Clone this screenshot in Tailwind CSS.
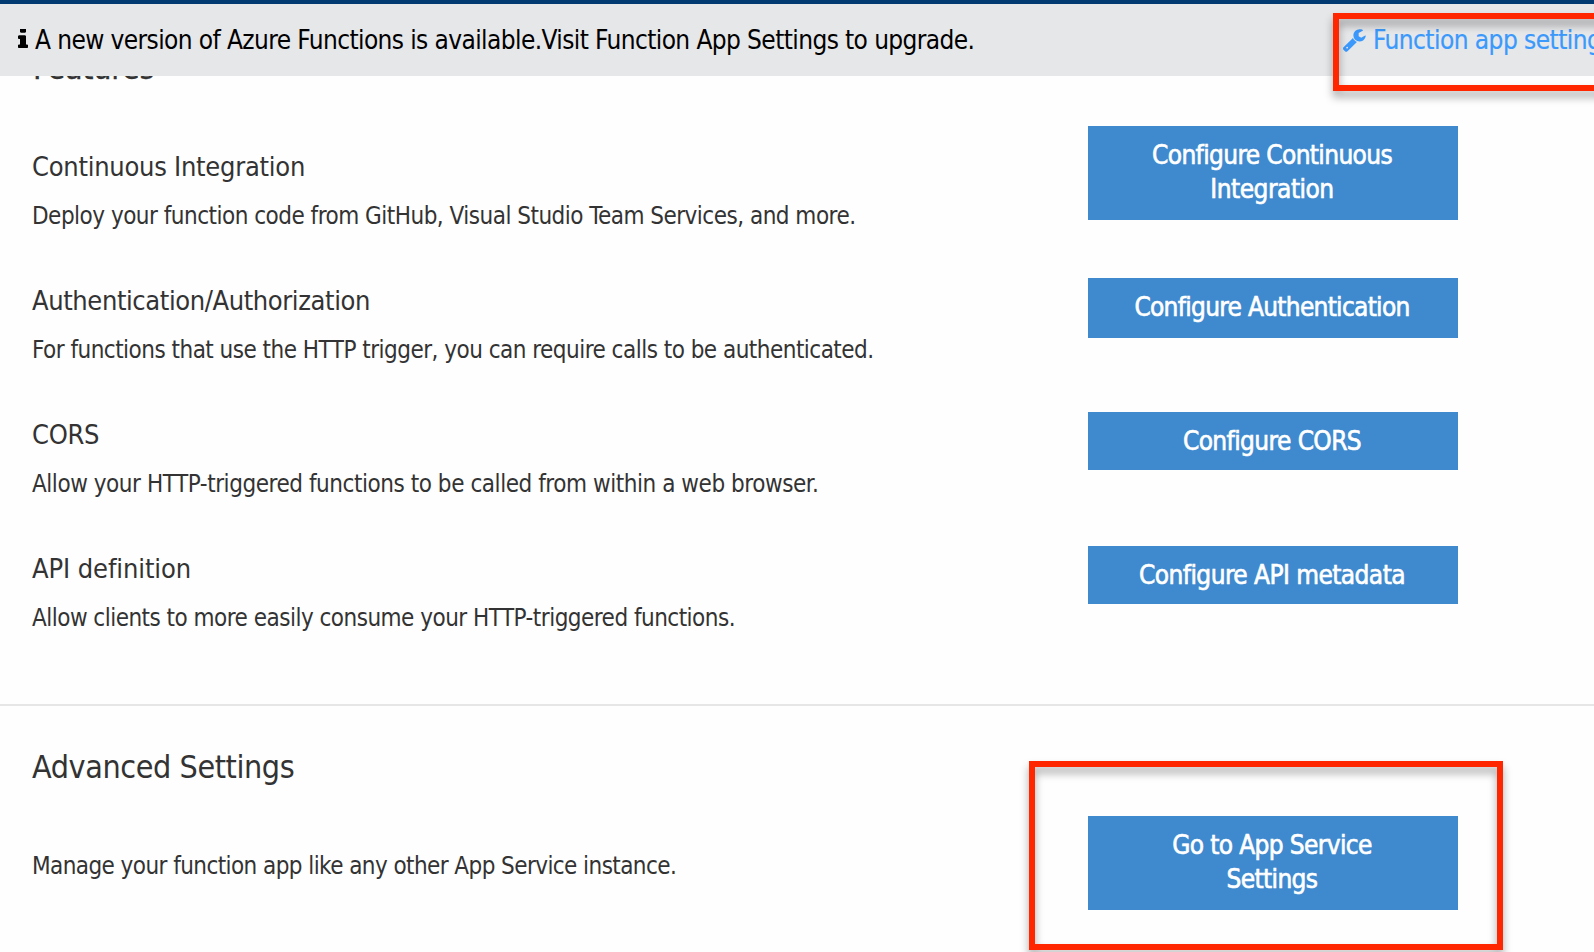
<!DOCTYPE html>
<html lang="en">
<head>
<meta charset="utf-8">
<title>Function app settings</title>
<script src="https://cdn.jsdelivr.net/npm/@tailwindcss/browser@4"></script>
</head>
<body class="relative h-[952px] w-[1594px] overflow-hidden bg-[#fefefe] font-['DejaVu_Sans_Condensed','Noto_Sans',sans-serif] text-[#333]">
  <!-- Notification banner -->
  <header class="relative z-10 flex h-[76px] items-start border-t-4 border-[#003a70] bg-[#e6e7e9] pt-[19px] text-[26px] leading-[34px] text-black">
    <svg class="ml-[18px] mt-[6px] h-[20px] w-[10px] shrink-0" viewBox="0 0 640 1408" preserveAspectRatio="none" fill="currentColor"><g transform="matrix(1 0 0 -1 0 1344)"><path d="M640 192v-128q0 -26 -19 -45t-45 -19h-512q-26 0 -45 19t-19 45v128q0 26 19 45t45 19h64v384h-64q-26 0 -45 19t-19 45v128q0 26 19 45t45 19h384q26 0 45 -19t19 -45v-576h64q26 0 45 -19t19 -45zM512 1344v-192q0 -26 -19 -45t-45 -19h-256q-26 0 -45 19t-19 45v192q0 26 19 45t45 19h256q26 0 45 -19t19 -45z"/></g></svg>
    <p class="ml-[7px] whitespace-nowrap tracking-[-0.605px]">A new version of Azure Functions is available.Visit Function App Settings to upgrade.</p>
    <a class="ml-auto flex w-[251px] shrink-0 whitespace-nowrap text-[#3b99fc]">
      <svg class="mt-[6px] h-[23px] w-[23px] shrink-0" viewBox="0 0 1662 1643" fill="currentColor"><g transform="matrix(1 0 0 -1 -21 1408)"><path d="M384 64q0 26 -19 45t-45 19t-45 -19t-19 -45t19 -45t45 -19t45 19t19 45zM1028 484l-682 -682q-37 -37 -90 -37q-52 0 -91 37l-106 108q-38 36 -38 90q0 53 38 91l681 681q39 -98 114.500 -173.500t173.500 -114.500zM1662 919q0 -39 -23 -106q-47 -134 -164.500 -217.500t-258.500 -83.500q-185 0 -316.500 131.500t-131.500 316.500t131.500 316.500t316.500 131.500q58 0 121.500 -16.500t107.500 -46.500q16 -11 16 -28t-16 -28l-293 -169v-224l193 -107q5 3 79 48.500t135.500 81t70.500 35.500q15 0 23.500 -10t8.500 -25z"/></g></svg>
      <span class="ml-[7px] tracking-[-0.55px] [-webkit-text-stroke:0.2px_currentColor]">Function app settings</span>
    </a>
  </header>

  <main>
    <section class="box-content h-[656px] border-b-2 border-[#e6e6e6]">
      <h2 class="-mt-[28px] ml-[33px] h-[78px] text-[32px] leading-[40px] tracking-[-0.3px] [-webkit-text-stroke:0.3px_currentColor]">Features</h2>

      <div class="flex h-[134px] items-start">
        <div class="w-[1088px] pt-6 pl-8 whitespace-nowrap">
          <h3 class="text-[27px] leading-[34px] tracking-[-0.26px]">Continuous Integration</h3>
          <p class="mt-[15px] text-[24px] leading-[34px] tracking-[-0.51px]">Deploy your function code from GitHub, Visual Studio Team Services, and more.</p>
        </div>
        <button class="flex h-[94px] w-[370px] flex-col items-center justify-center bg-[#3f8ace] pr-[2px] pb-[2px] text-[26px] leading-[34px] text-white [-webkit-text-stroke:0.6px_white]"><span class="tracking-[-0.65px]">Configure Continuous</span><span class="tracking-[-0.5px]">Integration</span></button>
      </div>

      <div class="flex h-[134px] items-start">
        <div class="w-[1088px] pt-6 pl-8 whitespace-nowrap">
          <h3 class="text-[27px] leading-[34px] tracking-[-0.4px]">Authentication/Authorization</h3>
          <p class="mt-[15px] text-[24px] leading-[34px] tracking-[-0.52px]">For functions that use the HTTP trigger, you can require calls to be authenticated.</p>
        </div>
        <button class="mt-[18px] h-[60px] w-[370px] bg-[#3f8ace] pr-[2px] pb-[2px] text-[26px] leading-[34px] tracking-[-0.72px] text-white [-webkit-text-stroke:0.6px_white]">Configure Authentication</button>
      </div>

      <div class="flex h-[134px] items-start">
        <div class="w-[1088px] pt-6 pl-8 whitespace-nowrap">
          <h3 class="text-[27px] leading-[34px] tracking-[-0.3px]">CORS</h3>
          <p class="mt-[15px] text-[24px] leading-[34px] tracking-[-0.45px]">Allow your HTTP-triggered functions to be called from within a web browser.</p>
        </div>
        <button class="mt-[18px] h-[58px] w-[370px] bg-[#3f8ace] pr-[2px] text-[26px] leading-[34px] tracking-[-0.6px] text-white [-webkit-text-stroke:0.6px_white]">Configure CORS</button>
      </div>

      <div class="flex h-[134px] items-start">
        <div class="w-[1088px] pt-6 pl-8 whitespace-nowrap">
          <h3 class="text-[27px] leading-[34px] tracking-[-0.1px]">API definition</h3>
          <p class="mt-[15px] text-[24px] leading-[34px] tracking-[-0.52px]">Allow clients to more easily consume your HTTP-triggered functions.</p>
        </div>
        <button class="mt-[18px] h-[58px] w-[370px] bg-[#3f8ace] pr-[2px] text-[26px] leading-[34px] tracking-[-0.57px] text-white [-webkit-text-stroke:0.6px_white]">Configure API metadata</button>
      </div>
    </section>

    <section class="pt-[41px]">
      <h2 class="ml-8 text-[32px] leading-[40px] tracking-[-0.42px]">Advanced Settings</h2>
      <div class="mt-[29px] flex items-start">
        <p class="w-[1088px] pt-[33px] pl-8 text-[24px] leading-[34px] tracking-[-0.575px] whitespace-nowrap">Manage your function app like any other App Service instance.</p>
        <button class="flex h-[94px] w-[370px] flex-col items-center justify-center bg-[#3f8ace] pr-[2px] pb-[2px] text-[26px] leading-[34px] text-white [-webkit-text-stroke:0.6px_white]"><span class="tracking-[-0.63px]">Go to App Service</span><span class="tracking-[-0.65px]">Settings</span></button>
      </div>
    </section>
  </main>

  <!-- Highlight frames -->
  <div class="pointer-events-none absolute top-[13px] left-[1333px] z-20 h-[78px] w-[300px] border-6 border-[#ff2600] drop-shadow-[0_6px_4px_rgba(0,0,0,0.35)]"></div>
  <div class="pointer-events-none absolute top-[761px] left-[1029px] z-20 h-[189px] w-[474px] border-6 border-[#ff2600] drop-shadow-[0_6px_4px_rgba(0,0,0,0.35)]"></div>
</body>
</html>
